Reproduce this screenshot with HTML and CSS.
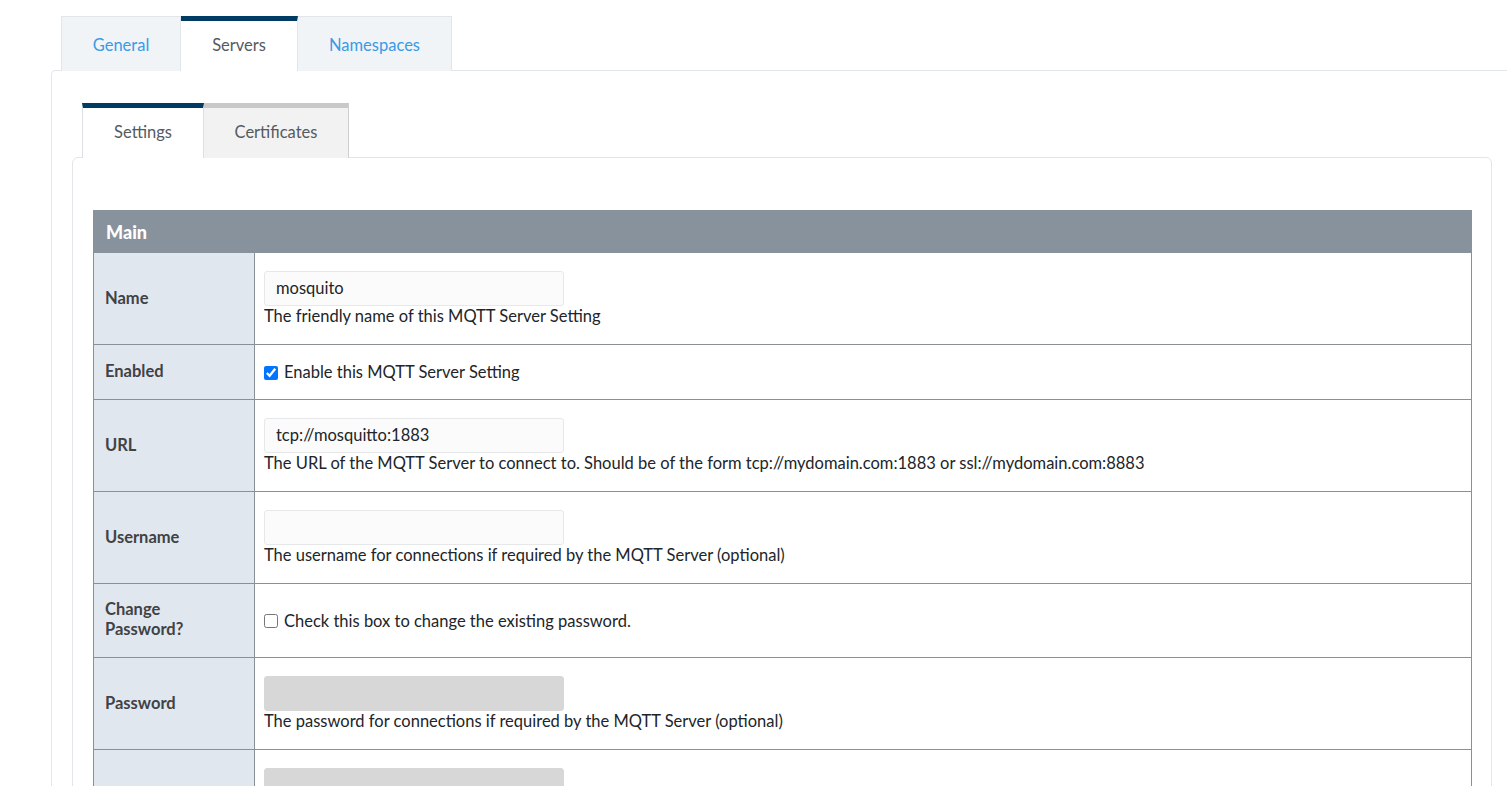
FILE: index.html
```html
<!DOCTYPE html>
<html>
<head>
<meta charset="utf-8">
<link rel="stylesheet" href="styles.css">
</head>
<body>
<div class="page">
  <div class="tabs">
    <a class="tab tab-general">General</a>
    <a class="tab tab-servers active">Servers</a>
    <a class="tab tab-ns">Namespaces</a>
  </div>
  <div class="panel">
    <div class="subtabs">
      <a class="subtab active">Settings</a>
      <a class="subtab inactive">Certificates</a>
    </div>
    <div class="subpanel">
      <table class="form">
        <thead>
          <tr><th colspan="2">Main</th></tr>
        </thead>
        <tbody>
          <tr>
            <td class="label">Name</td>
            <td class="value">
              <input class="field" type="text" value="mosquito">
              <div class="help">The friendly name of this MQTT Server Setting</div>
            </td>
          </tr>
          <tr>
            <td class="label">Enabled</td>
            <td class="value value-check">
              <label class="check"><input type="checkbox" checked> Enable this MQTT Server Setting</label>
            </td>
          </tr>
          <tr>
            <td class="label">URL</td>
            <td class="value">
              <input class="field" type="text" value="tcp://mosquitto:1883">
              <div class="help">The URL of the MQTT Server to connect to. Should be of the form tcp://mydomain.com:1883 or ssl://mydomain.com:8883</div>
            </td>
          </tr>
          <tr>
            <td class="label">Username</td>
            <td class="value">
              <input class="field" type="text" value="">
              <div class="help">The username for connections if required by the MQTT Server (optional)</div>
            </td>
          </tr>
          <tr>
            <td class="label label-two">Change<br>Password?</td>
            <td class="value value-check">
              <label class="check"><input type="checkbox"> Check this box to change the existing password.</label>
            </td>
          </tr>
          <tr>
            <td class="label">Password</td>
            <td class="value">
              <input class="field" type="password" disabled>
              <div class="help">The password for connections if required by the MQTT Server (optional)</div>
            </td>
          </tr>
          <tr>
            <td class="label"></td>
            <td class="value">
              <input class="field" type="password" disabled>
            </td>
          </tr>
        </tbody>
      </table>
    </div>
  </div>
</div>
</body>
</html>
```
FILE: styles.css
```css
html, body {
  margin: 0;
  padding: 0;
  background: #fff;
  overflow: hidden;
}
body {
  font-family: Lato, "Liberation Sans", sans-serif;
  font-size: 16.5px;
  line-height: 20px;
  color: #212529;
}
.page {
  padding: 16px 0 0 51px;
}
.tabs {
  display: flex;
  margin-left: 10px;
  position: relative;
  z-index: 1;
}
.tab {
  display: block;
  box-sizing: border-box;
  height: 55px;
  padding: 18px 0 0;
  text-align: center;
  color: #3a9ae6;
  background: #f1f4f7;
  border: 1px solid #e1e6eb;
  border-bottom: none;
}
.tab-general { width: 120px; }
.tab-servers { width: 117px; border-left: none; }
.tab-ns { width: 154px; border-left: none; }
.tab.active {
  background: #fff;
  color: #555a60;
  border-top: 5px solid #003b64;
  padding-top: 14px;
}
.panel {
  box-sizing: border-box;
  width: 1490px;
  margin-top: -1px;
  border: 1px solid #e2e7ec;
  border-radius: 4px;
  padding: 32px 20px 40px 20px;
  background: #fff;
}
.subtabs {
  display: flex;
  margin-left: 10px;
  position: relative;
  z-index: 1;
}
.subtab {
  display: block;
  box-sizing: border-box;
  height: 55px;
  padding: 14px 0 0;
  text-align: center;
  color: #555a60;
  border: 1px solid #dcdfe3;
  border-top: 5px solid #003b64;
  border-bottom: none;
  background: #fff;
}
.subtab.active { width: 122px; }
.subtab.inactive {
  width: 145px;
  background: #f2f2f2;
  border-top-color: #c9c9c9;
  border-left: none;
  border-right-color: #cfcfcf;
}
.subpanel {
  box-sizing: border-box;
  width: 1420px;
  margin-top: -1px;
  border: 1px solid #e3e6e9;
  border-radius: 6px;
  padding: 52px 20px 40px 20px;
  background: #fff;
}
.form {
  width: 1379px;
  border-collapse: collapse;
}
.form th {
  background: #87929d;
  color: #fff;
  text-align: left;
  font-weight: 900;
  font-size: 18px;
  height: 42px;
  padding: 0 12px;
  box-sizing: border-box;
  border: 1px solid #87929d;
}
.form td {
  border: 1px solid #8a9097;
  padding: 17px 9px;
  vertical-align: middle;
}
.form td.label {
  width: 139px;
  background: #e1e7ee;
  font-weight: bold;
  color: #3f4246;
  padding-left: 11px;
  padding-right: 10px;
  padding-top: 16px;
  padding-bottom: 18px;
}
.form td.label-two {
  line-height: 19.5px;
  padding-top: 16px;
}
.form td.value {
  padding-top: 18px;
}
.form td.value-check {
  padding-top: 17px;
  padding-bottom: 17px;
}
.field {
  display: block;
  box-sizing: border-box;
  width: 300px;
  height: 35px;
  margin: 0;
  padding: 0 11px 2px;
  border: 1px solid #e6e8ea;
  border-radius: 3px;
  background: #fbfbfb;
  font-family: inherit;
  font-size: 16.5px;
  color: #212529;
}
.field:disabled {
  background: #d7d7d7;
  border-color: #d7d7d7;
}
.help {
  line-height: 20px;
  padding-bottom: 1px;
}
.check {
  display: flex;
  align-items: center;
}
.check input {
  width: 14px;
  height: 14px;
  margin: 1px 6px 0 0;
}
```
